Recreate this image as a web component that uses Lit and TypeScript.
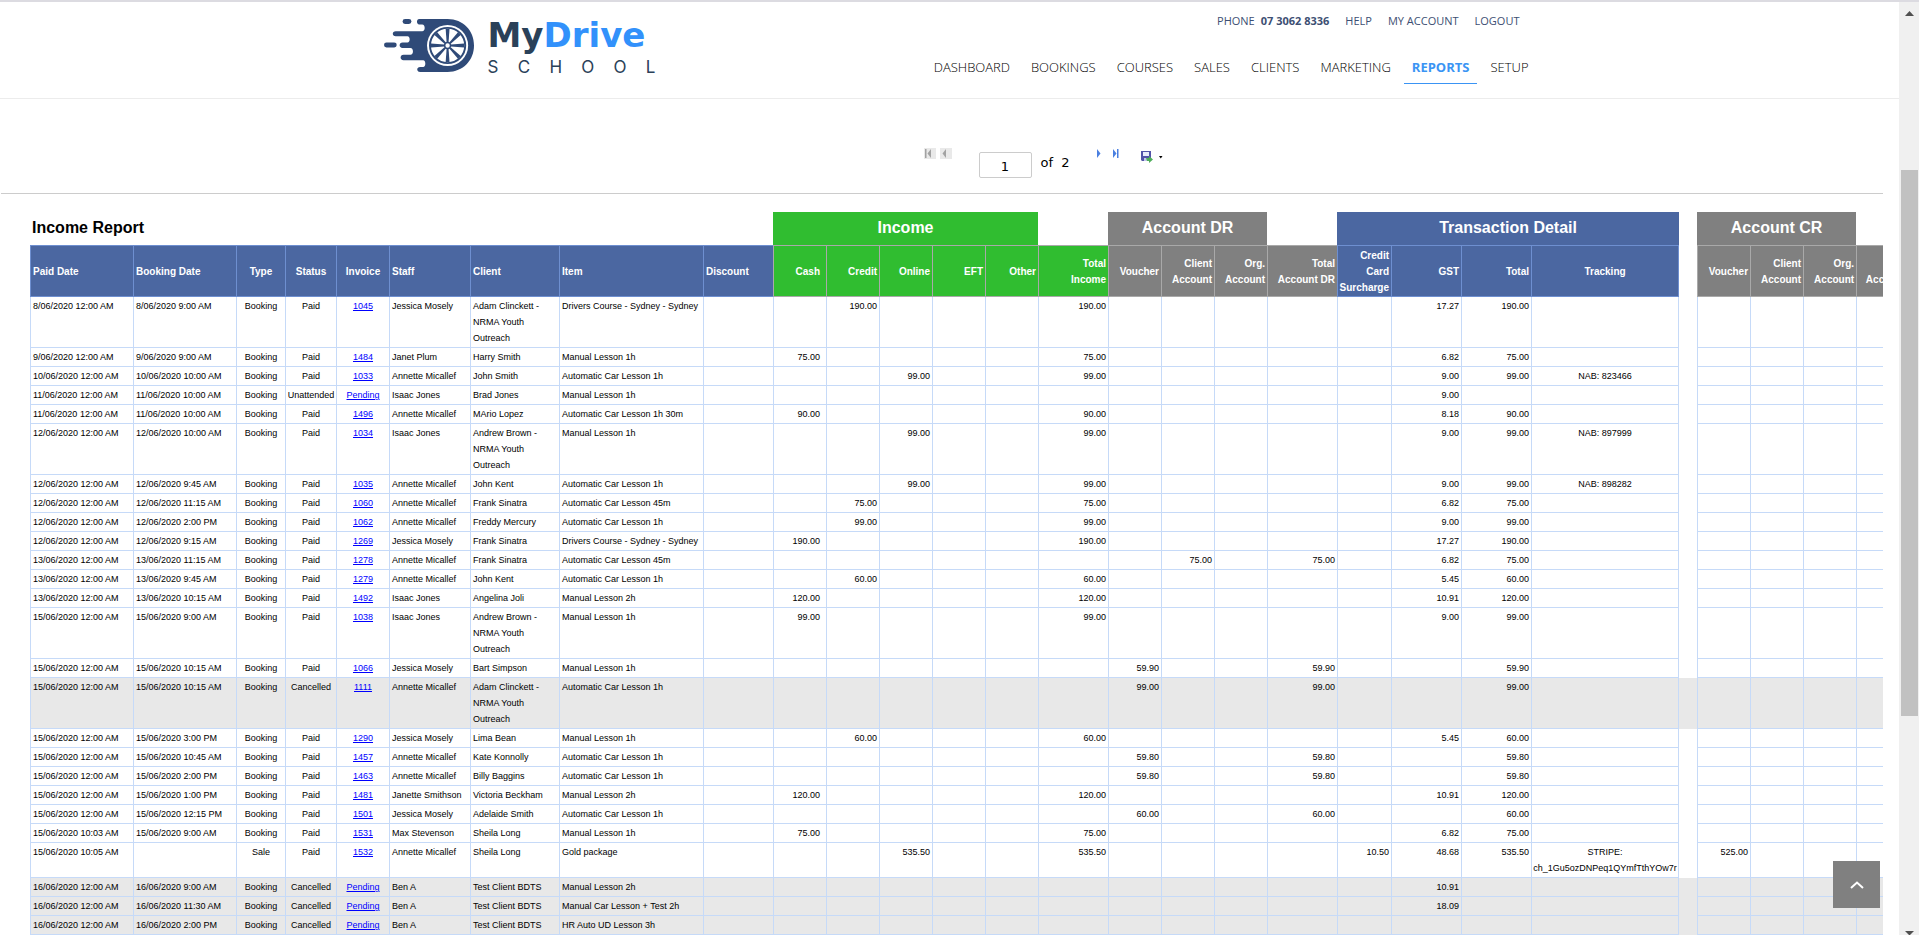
import { LitElement, html, css, svg, nothing } from "lit";
import { customElement, property } from "lit/decorators.js";
import { classMap } from "lit/directives/class-map.js";

type Align = "left" | "center" | "right";
type Tone = "blue" | "green" | "gray" | "gap";

interface Column {
  key: string;
  lines: string[];
  width: number;
  align: Align;
  tone: Tone;
  inset?: boolean;
  last?: boolean;
}

const COLUMNS: Column[] = [
  { key: "paid", lines: ["Paid Date"], width: 103, align: "left", tone: "blue" },
  { key: "booked", lines: ["Booking Date"], width: 103, align: "left", tone: "blue" },
  { key: "type", lines: ["Type"], width: 49, align: "center", tone: "blue" },
  { key: "status", lines: ["Status"], width: 51, align: "center", tone: "blue" },
  { key: "invoice", lines: ["Invoice"], width: 53, align: "center", tone: "blue" },
  { key: "staff", lines: ["Staff"], width: 81, align: "left", tone: "blue" },
  { key: "client", lines: ["Client"], width: 89, align: "left", tone: "blue" },
  { key: "item", lines: ["Item"], width: 144, align: "left", tone: "blue" },
  { key: "discount", lines: ["Discount"], width: 70, align: "left", tone: "blue" },
  { key: "cash", lines: ["Cash"], width: 53, align: "right", tone: "green", inset: true },
  { key: "credit", lines: ["Credit"], width: 53, align: "right", tone: "green" },
  { key: "online", lines: ["Online"], width: 53, align: "right", tone: "green" },
  { key: "eft", lines: ["EFT"], width: 53, align: "right", tone: "green" },
  { key: "other", lines: ["Other"], width: 53, align: "right", tone: "green" },
  { key: "income", lines: ["Total", "Income"], width: 70, align: "right", tone: "green" },
  { key: "drVoucher", lines: ["Voucher"], width: 53, align: "right", tone: "gray" },
  { key: "drClient", lines: ["Client", "Account"], width: 53, align: "right", tone: "gray" },
  { key: "drOrg", lines: ["Org.", "Account"], width: 53, align: "right", tone: "gray" },
  { key: "drTotal", lines: ["Total", "Account DR"], width: 70, align: "right", tone: "gray" },
  { key: "surcharge", lines: ["Credit", "Card", "Surcharge"], width: 54, align: "right", tone: "blue" },
  { key: "gst", lines: ["GST"], width: 70, align: "right", tone: "blue" },
  { key: "total", lines: ["Total"], width: 70, align: "right", tone: "blue" },
  { key: "tracking", lines: ["Tracking"], width: 148, align: "center", tone: "blue", last: true },
  { key: "gap", lines: [], width: 18, align: "left", tone: "gap" },
  { key: "crVoucher", lines: ["Voucher"], width: 53, align: "right", tone: "gray" },
  { key: "crClient", lines: ["Client", "Account"], width: 53, align: "right", tone: "gray" },
  { key: "crOrg", lines: ["Org.", "Account"], width: 53, align: "right", tone: "gray" },
  { key: "crTotal", lines: ["Total", "Account CR"], width: 70, align: "right", tone: "gray", last: true },
];

const TABLE_WIDTH = COLUMNS.reduce((sum, c) => sum + c.width, 0);

type Row = Record<string, string>;

const row = (
  paid: string,
  booked: string,
  status: string,
  invoice: string,
  staff: string,
  client: string,
  item: string,
  amounts: Row = {},
  type = "Booking",
): Row => ({ paid, booked, type, status, invoice, staff, client, item, ...amounts });

const ADAM = "Adam Clinckett - NRMA Youth Outreach";
const ANDREW = "Andrew Brown - NRMA Youth Outreach";

const ROWS: Row[] = [
  row("8/06/2020 12:00 AM", "8/06/2020 9:00 AM", "Paid", "1045", "Jessica Mosely", ADAM, "Drivers Course - Sydney - Sydney", { credit: "190.00", income: "190.00", gst: "17.27", total: "190.00" }),
  row("9/06/2020 12:00 AM", "9/06/2020 9:00 AM", "Paid", "1484", "Janet Plum", "Harry Smith", "Manual Lesson 1h", { cash: "75.00", income: "75.00", gst: "6.82", total: "75.00" }),
  row("10/06/2020 12:00 AM", "10/06/2020 10:00 AM", "Paid", "1033", "Annette Micallef", "John Smith", "Automatic Car Lesson 1h", { online: "99.00", income: "99.00", gst: "9.00", total: "99.00", tracking: "NAB: 823466" }),
  row("11/06/2020 12:00 AM", "11/06/2020 10:00 AM", "Unattended", "Pending", "Isaac Jones", "Brad Jones", "Manual Lesson 1h", { gst: "9.00" }),
  row("11/06/2020 12:00 AM", "11/06/2020 10:00 AM", "Paid", "1496", "Annette Micallef", "MArio Lopez", "Automatic Car Lesson 1h 30m", { cash: "90.00", income: "90.00", gst: "8.18", total: "90.00" }),
  row("12/06/2020 12:00 AM", "12/06/2020 10:00 AM", "Paid", "1034", "Isaac Jones", ANDREW, "Manual Lesson 1h", { online: "99.00", income: "99.00", gst: "9.00", total: "99.00", tracking: "NAB: 897999" }),
  row("12/06/2020 12:00 AM", "12/06/2020 9:45 AM", "Paid", "1035", "Annette Micallef", "John Kent", "Automatic Car Lesson 1h", { online: "99.00", income: "99.00", gst: "9.00", total: "99.00", tracking: "NAB: 898282" }),
  row("12/06/2020 12:00 AM", "12/06/2020 11:15 AM", "Paid", "1060", "Annette Micallef", "Frank Sinatra", "Automatic Car Lesson 45m", { credit: "75.00", income: "75.00", gst: "6.82", total: "75.00" }),
  row("12/06/2020 12:00 AM", "12/06/2020 2:00 PM", "Paid", "1062", "Annette Micallef", "Freddy Mercury", "Automatic Car Lesson 1h", { credit: "99.00", income: "99.00", gst: "9.00", total: "99.00" }),
  row("12/06/2020 12:00 AM", "12/06/2020 9:15 AM", "Paid", "1269", "Jessica Mosely", "Frank Sinatra", "Drivers Course - Sydney - Sydney", { cash: "190.00", income: "190.00", gst: "17.27", total: "190.00" }),
  row("13/06/2020 12:00 AM", "13/06/2020 11:15 AM", "Paid", "1278", "Annette Micallef", "Frank Sinatra", "Automatic Car Lesson 45m", { drClient: "75.00", drTotal: "75.00", gst: "6.82", total: "75.00" }),
  row("13/06/2020 12:00 AM", "13/06/2020 9:45 AM", "Paid", "1279", "Annette Micallef", "John Kent", "Automatic Car Lesson 1h", { credit: "60.00", income: "60.00", gst: "5.45", total: "60.00" }),
  row("13/06/2020 12:00 AM", "13/06/2020 10:15 AM", "Paid", "1492", "Isaac Jones", "Angelina Joli", "Manual Lesson 2h", { cash: "120.00", income: "120.00", gst: "10.91", total: "120.00" }),
  row("15/06/2020 12:00 AM", "15/06/2020 9:00 AM", "Paid", "1038", "Isaac Jones", ANDREW, "Manual Lesson 1h", { cash: "99.00", income: "99.00", gst: "9.00", total: "99.00" }),
  row("15/06/2020 12:00 AM", "15/06/2020 10:15 AM", "Paid", "1066", "Jessica Mosely", "Bart Simpson", "Manual Lesson 1h", { drVoucher: "59.90", drTotal: "59.90", total: "59.90" }),
  row("15/06/2020 12:00 AM", "15/06/2020 10:15 AM", "Cancelled", "1111", "Annette Micallef", ADAM, "Automatic Car Lesson 1h", { drVoucher: "99.00", drTotal: "99.00", total: "99.00" }),
  row("15/06/2020 12:00 AM", "15/06/2020 3:00 PM", "Paid", "1290", "Jessica Mosely", "Lima Bean", "Manual Lesson 1h", { credit: "60.00", income: "60.00", gst: "5.45", total: "60.00" }),
  row("15/06/2020 12:00 AM", "15/06/2020 10:45 AM", "Paid", "1457", "Annette Micallef", "Kate Konnolly", "Automatic Car Lesson 1h", { drVoucher: "59.80", drTotal: "59.80", total: "59.80" }),
  row("15/06/2020 12:00 AM", "15/06/2020 2:00 PM", "Paid", "1463", "Annette Micallef", "Billy Baggins", "Automatic Car Lesson 1h", { drVoucher: "59.80", drTotal: "59.80", total: "59.80" }),
  row("15/06/2020 12:00 AM", "15/06/2020 1:00 PM", "Paid", "1481", "Janette Smithson", "Victoria Beckham", "Manual Lesson 2h", { cash: "120.00", income: "120.00", gst: "10.91", total: "120.00" }),
  row("15/06/2020 12:00 AM", "15/06/2020 12:15 PM", "Paid", "1501", "Jessica Mosely", "Adelaide Smith", "Automatic Car Lesson 1h", { drVoucher: "60.00", drTotal: "60.00", total: "60.00" }),
  row("15/06/2020 10:03 AM", "15/06/2020 9:00 AM", "Paid", "1531", "Max Stevenson", "Sheila Long", "Manual Lesson 1h", { cash: "75.00", income: "75.00", gst: "6.82", total: "75.00" }),
  row("15/06/2020 10:05 AM", "", "Paid", "1532", "Annette Micallef", "Sheila Long", "Gold package", { online: "535.50", income: "535.50", surcharge: "10.50", gst: "48.68", total: "535.50", tracking: "STRIPE:\nch_1Gu5ozDNPeq1QYmfTthYOw7r", crVoucher: "525.00" }, "Sale"),
  row("16/06/2020 12:00 AM", "16/06/2020 9:00 AM", "Cancelled", "Pending", "Ben A", "Test Client BDTS", "Manual Lesson 2h", { gst: "10.91" }),
  row("16/06/2020 12:00 AM", "16/06/2020 11:30 AM", "Cancelled", "Pending", "Ben A", "Test Client BDTS", "Manual Car Lesson + Test 2h", { gst: "18.09" }),
  row("16/06/2020 12:00 AM", "16/06/2020 2:00 PM", "Cancelled", "Pending", "Ben A", "Test Client BDTS", "HR Auto UD Lesson 3h"),
];

@customElement("school-logo")
class SchoolLogo extends LitElement {
  static styles = css`
    :host {
      display: flex;
      align-items: flex-start;
      gap: 14px;
    }
    .mark {
      display: block;
      width: 90px;
      height: 57px;
    }
    .words {
      display: flex;
      flex-direction: column;
      width: 168px;
      font-family: Inter, "Open Sans", sans-serif;
      color: #2a4159;
    }
    .name {
      font-family: "DejaVu Sans", Verdana, sans-serif;
      font-size: 34px;
      line-height: 36px;
      font-weight: 700;
    }
    .drive {
      color: #3291fb;
    }
    .school {
      display: flex;
      justify-content: space-between;
      font-size: 17px;
      line-height: 28px;
      font-weight: 400;
    }
  `;

  render() {
    const spokes = [0, 45, 90, 135, 180, 225, 270, 315];
    return html`
      <svg class="mark" viewBox="0 0 92 58" aria-hidden="true">
        <path
          fill="#2f4a78"
          d="M36 2H65C81 2 92 14 92 29S81 56 65 56H37C33 56 33 51 37 51H40C43 51 43 44 40 44H20C16 44 16 38.500 20 38.500H27C30.500 38.500 30.500 31.500 27 31.500H19C15 31.500 15 26 19 26H24C27 26 27 19.500 24 19.500H12C8 19.500 8 14.500 12 14.500H39C42.500 14.500 42.500 7.500 39 7.500H36C33 7.500 33 2 36 2Z"
        />
        <rect x="19" y="2" width="9" height="5" rx="2.500" fill="#2f4a78" />
        <rect x="0" y="26" width="13" height="5" rx="2.500" fill="#2f4a78" />
        <circle cx="65" cy="29" r="21" fill="#fff" />
        <circle cx="65" cy="29" r="18" fill="#fff" stroke="#2f4a78" stroke-width="2" />
        ${spokes.map(
          (a) => svg`<path transform="rotate(${a} 65 29)" d="M64 25.500L63 12h4L66 25.500Z" fill="#2f4a78" />`,
        )}
        <circle cx="65" cy="29" r="3" fill="#fff" stroke="#2f4a78" stroke-width="1.500" />
      </svg>
      <div class="words">
        <div class="name">My<span class="drive">Drive</span></div>
        <div class="school">${[..."SCHOOL"].map((c) => html`<span>${c}</span>`)}</div>
      </div>
    `;
  }
}

@customElement("site-header")
class SiteHeader extends LitElement {
  static styles = css`
    :host {
      display: block;
      border-bottom: 1px solid #ececec;
      font-family: "Open Sans", "Noto Sans", sans-serif;
    }
    .inner {
      display: flex;
      justify-content: space-between;
      max-width: 1174px;
      height: 96px;
      margin: 0 auto;
    }
    .logo {
      margin: 15px 0 0 21px;
    }
    .menus {
      display: flex;
      flex-direction: column;
      align-items: flex-end;
      gap: 22px;
      padding-top: 10px;
    }
    .account {
      display: flex;
      gap: 16px;
      padding-right: 17px;
      font-size: 11px;
      line-height: 18px;
      color: #3d4f73;
    }
    .account a {
      color: inherit;
      text-decoration: none;
    }
    .phone {
      display: flex;
      gap: 6px;
    }
    .nav {
      display: flex;
      gap: 5px;
    }
    .nav a {
      padding: 0 8px;
      font-size: 13px;
      line-height: 31px;
      border-bottom: 1px solid transparent;
      color: #000;
      font-weight: 300;
      text-decoration: none;
    }
    .nav a.current {
      color: #3a94f4;
      font-weight: 700;
      border-color: #3a94f4;
    }
  `;

  render() {
    const items = ["DASHBOARD", "BOOKINGS", "COURSES", "SALES", "CLIENTS", "MARKETING", "REPORTS", "SETUP"];
    return html`
      <div class="inner">
        <school-logo class="logo"></school-logo>
        <div class="menus">
          <div class="account">
            <span class="phone">PHONE <b>07 3062 8336</b></span>
            <a href="#help">HELP</a>
            <a href="#account">MY ACCOUNT</a>
            <a href="#logout">LOGOUT</a>
          </div>
          <nav class="nav">
            ${items.map(
              (i) => html`<a href="#${i.toLowerCase()}" class=${classMap({ current: i === "REPORTS" })}>${i}</a>`,
            )}
          </nav>
        </div>
      </div>
    `;
  }
}

@customElement("report-toolbar")
class ReportToolbar extends LitElement {
  static styles = css`
    :host {
      display: flex;
      justify-content: center;
      align-items: flex-start;
      height: 45px;
      padding: 49px 0 0 204px;
      border-bottom: 1px solid #ccc;
      font-family: "DejaVu Sans", sans-serif;
      font-size: 13px;
      color: #000;
    }
    .group {
      display: flex;
      gap: 4px;
      width: 55px;
    }
    .page {
      display: flex;
      align-items: center;
      gap: 9px;
      width: 117px;
      padding-top: 4px;
      line-height: 20px;
    }
    .forward {
      width: 45px;
    }
    .save {
      padding-top: 3px;
    }
    button {
      display: block;
      padding: 0;
      border: 0;
      background: none;
    }
    button:disabled {
      background: #e9e9e9;
    }
    svg {
      display: block;
    }
    input {
      box-sizing: border-box;
      width: 53px;
      height: 26px;
      padding: 2px 0 0;
      border: 1px solid #ccc;
      border-radius: 2px;
      font: inherit;
      text-align: center;
      color: #000;
    }
    .count {
      white-space: pre;
      padding-bottom: 4px;
    }
  `;

  render() {
    return html`
      <div class="group">
        <button disabled aria-label="First page">
          <svg width="12" height="11" viewBox="0 0 12 11"><path d="M1 1h1.500v9H1zM7 1v9L3.500 5.500z" fill="#a2a2a2" /></svg>
        </button>
        <button disabled aria-label="Previous page">
          <svg width="12" height="11" viewBox="0 0 12 11"><path d="M6 1v9L2.500 5.500z" fill="#a2a2a2" /></svg>
        </button>
      </div>
      <div class="page">
        <input aria-label="Page" value="1" />
        <span class="count">of  2</span>
      </div>
      <div class="group forward">
        <button aria-label="Next page">
          <svg width="12" height="11" viewBox="0 0 12 11"><path d="M1 1v9L4.500 5.500z" fill="#4a7fe0" /></svg>
        </button>
        <button aria-label="Last page">
          <svg width="12" height="11" viewBox="0 0 12 11"><path d="M1 1v9L4.500 5.500zM5 1h1.500v9H5z" fill="#4a7fe0" /></svg>
        </button>
      </div>
      <button class="save" aria-label="Export">
        <svg width="24" height="13" viewBox="0 0 24 13">
          <path d="M0 0h10v10H1L0 9z" fill="#5254a8" />
          <path d="M2 1h6v4H2z" fill="#e9ecfb" />
          <path d="M3 7h4v3H3z" fill="#c3c6ea" />
          <path d="M5 7h3V5l4 3.500L8 12v-2H6z" fill="#4fae5b" />
          <path d="M18 5h3.500l-1.700 2.500z" fill="#000" />
        </svg>
      </button>
    `;
  }
}

@customElement("income-report")
class IncomeReport extends LitElement {
  @property({ attribute: false }) rows: Row[] = ROWS;

  static styles = css`
    :host {
      display: block;
      overflow: hidden;
      padding: 18px 0 0 29px;
      font-family: "Liberation Sans", Arial, sans-serif;
      color: #000;
    }
    table {
      table-layout: fixed;
      border-collapse: separate;
      border-spacing: 0;
    }
    .groups th {
      height: 33px;
      padding: 0 2px 2px;
      box-sizing: border-box;
      font-size: 16px;
      line-height: 20px;
      color: #fff;
      text-align: center;
    }
    .groups .title {
      color: #000;
      text-align: left;
    }
    .blue {
      background: #4b67a1;
      --line: #6e8fd0;
    }
    .green {
      background: #30bd30;
      --line: #a9a9a9;
    }
    .gray {
      background: #808080;
      --line: #a9a9a9;
    }
    .heads th {
      padding: 2px 2px 0;
      font-size: 10px;
      line-height: 16px;
      color: #fff;
      vertical-align: middle;
      border: 0 solid var(--line);
      border-width: 1px 0 1px 1px;
    }
    td {
      padding: 1px 2px;
      font-size: 9px;
      line-height: 16px;
      vertical-align: top;
      white-space: pre-line;
      border: 0 solid #c6daf8;
      border-width: 0 0 1px 1px;
    }
    .heads th.left,
    td.left {
      text-align: left;
    }
    .heads th.center,
    td.center {
      text-align: center;
    }
    .heads th.right,
    td.right {
      text-align: right;
      padding-left: 1px;
    }
    .heads th.inset,
    td.inset {
      padding-right: 6px;
    }
    .heads th.last,
    td.last {
      border-right-width: 1px;
    }
    .heads th.gap,
    td.gap {
      border: 0;
    }
    .cancelled td {
      background: #e8e8e8;
    }
    td.tight {
      padding: 1px 0;
    }
    a {
      color: #00f;
    }
  `;

  private cell(c: Column, r: Row) {
    const value = r[c.key] ?? "";
    const classes = classMap({
      [c.align]: true,
      inset: !!c.inset,
      last: !!c.last,
      gap: c.tone === "gap",
      tight: c.key === "status" || c.key === "tracking",
    });
    const content = c.key === "invoice" ? html`<a href="#invoice">${value}</a>` : value || nothing;
    return html`<td class=${classes}>${content}</td>`;
  }

  private head(c: Column) {
    const classes = classMap({ [c.align]: true, [c.tone]: true, inset: !!c.inset, last: !!c.last });
    if (c.tone === "gap") return html`<td class="gap"></td>`;
    return html`<th scope="col" class=${classes}>${c.lines.map((l, i) => (i ? html`<br />${l}` : l))}</th>`;
  }

  render() {
    return html`
      <table style="width:${TABLE_WIDTH}px">
        <colgroup>
          ${COLUMNS.map((c) => html`<col style="width:${c.width}px" />`)}
        </colgroup>
        <thead>
          <tr class="groups">
            <th class="title" colspan="9">Income Report</th>
            <th class="green" colspan="5">Income</th>
            <th></th>
            <th class="gray" colspan="3">Account DR</th>
            <th></th>
            <th class="blue" colspan="4">Transaction Detail</th>
            <th></th>
            <th class="gray" colspan="3">Account CR</th>
            <th></th>
          </tr>
          <tr class="heads">${COLUMNS.map((c) => this.head(c))}</tr>
        </thead>
        <tbody>
          ${this.rows.map(
            (r) => html`<tr class=${classMap({ cancelled: r.status === "Cancelled" })}>${COLUMNS.map((c) => this.cell(c, r))}</tr>`,
          )}
        </tbody>
      </table>
    `;
  }
}

@customElement("app-root")
class AppRoot extends LitElement {
  static styles = css`
    :host {
      display: grid;
      grid-template-columns: minmax(0, 1fr) 20px;
      box-sizing: border-box;
      height: 100vh;
      overflow: hidden;
      position: relative;
      border-top: 2px solid #dcdbe1;
      background: #fff;
    }
    .page {
      overflow: hidden;
    }
    .viewer {
      margin: 0 16px 0 1px;
    }
    .scrollbar {
      display: grid;
      grid-template-rows: 18px 150fr 546fr 201fr 18px;
      justify-items: center;
      align-items: center;
      background: #f0f0f0;
    }
    .thumb {
      grid-row: 3;
      width: 17px;
      height: 100%;
      background: #c1c1c1;
    }
    .down {
      grid-row: 5;
      align-self: end;
    }
    .up {
      align-self: end;
    }
    .scrollbar svg {
      display: block;
    }
    .top {
      position: absolute;
      right: 39px;
      bottom: 27px;
      display: grid;
      place-items: center;
      width: 47px;
      height: 47px;
      padding: 0;
      border: 0;
      background: #808080;
    }
  `;

  render() {
    return html`
      <div class="page">
        <site-header></site-header>
        <main class="viewer">
          <report-toolbar></report-toolbar>
          <income-report></income-report>
        </main>
      </div>
      <div class="scrollbar" aria-hidden="true">
        <svg class="up" width="9" height="9" viewBox="0 0 9 9"><path d="M4.500 0L9 5H0z" fill="#505050" /></svg>
        <div class="thumb"></div>
        <svg class="down" width="9" height="4" viewBox="0 0 9 4"><path d="M0 0h9L5 4H4z" fill="#505050" /></svg>
      </div>
      <button class="top" aria-label="Back to top">
        <svg width="14" height="8" viewBox="0 0 14 8">
          <path d="M1 7l6-5.500L13 7" fill="none" stroke="#fff" stroke-width="2" />
        </svg>
      </button>
    `;
  }
}
